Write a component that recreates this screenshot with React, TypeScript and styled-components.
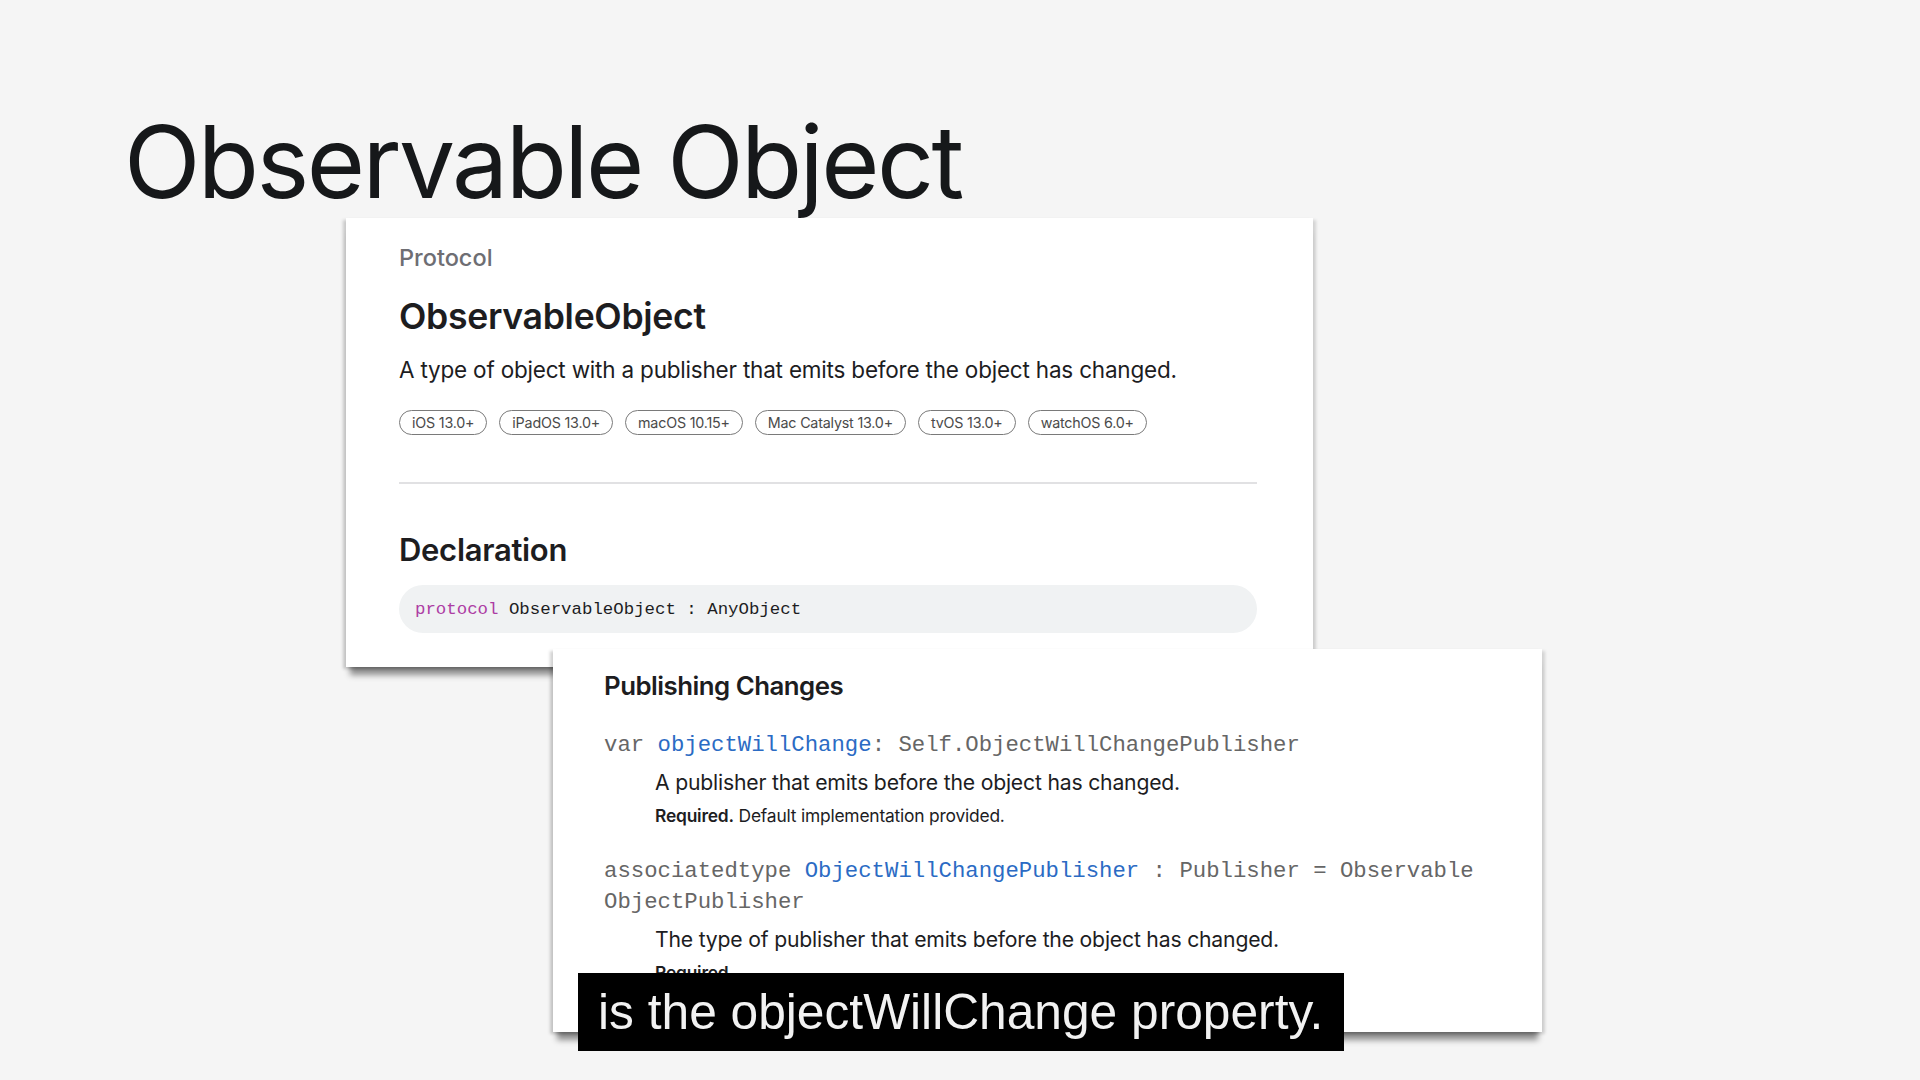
import React from 'react'
import styled, { createGlobalStyle } from 'styled-components'

const GlobalStyle = createGlobalStyle`
  html, body {
    margin: 0;
    padding: 0;
    background: #f5f5f5;
  }
  body {
    font-family: Inter, "Liberation Sans", sans-serif;
    color: #1d1d1f;
  }
`

const platforms = [
  'iOS 13.0+',
  'iPadOS 13.0+',
  'macOS 10.15+',
  'Mac Catalyst 13.0+',
  'tvOS 13.0+',
  'watchOS 6.0+',
]

export default function App(): JSX.Element {
  return (
    <Page>
      <GlobalStyle />
      <SlideTitle>Observable Object</SlideTitle>

      <ProtocolCard>
        <Eyebrow>Protocol</Eyebrow>
        <SymbolName>ObservableObject</SymbolName>
        <Abstract>
          A type of object with a publisher that emits before the object has
          changed.
        </Abstract>
        <BadgeRow>
          {platforms.map((p) => (
            <Badge key={p}>{p}</Badge>
          ))}
        </BadgeRow>
        <Divider />
        <SectionTitle>Declaration</SectionTitle>
        <CodeBlock>
          <Keyword>protocol</Keyword> ObservableObject : AnyObject
        </CodeBlock>
      </ProtocolCard>

      <TopicsCard>
        <TopicTitle>Publishing Changes</TopicTitle>

        <Signature>
          var <Link>objectWillChange</Link>: Self.ObjectWillChangePublisher
        </Signature>
        <TopicAbstract>A publisher that emits before the object has changed.</TopicAbstract>
        <Requirement>
          <strong>Required.</strong> Default implementation provided.
        </Requirement>

        <Signature $gap={29}>
          associatedtype <Link>ObjectWillChangePublisher</Link> : Publisher = Observable
          <br />
          ObjectPublisher
        </Signature>
        <TopicAbstract>
          The type of publisher that emits before the object has changed.
        </TopicAbstract>
        <Requirement>
          <strong>Required.</strong>
        </Requirement>
      </TopicsCard>

      <Subtitle>is the objectWillChange property.</Subtitle>
    </Page>
  )
}

const Page = styled.div`
  position: relative;
  width: 1920px;
  height: 1080px;
  overflow: hidden;
  background: #f5f5f5;
  display: flex;
  flex-direction: column;
  align-items: flex-start;
`

const SlideTitle = styled.h1`
  margin: 112px 0 0 124px;
  font-family: Inter, "Liberation Sans", sans-serif;
  font-weight: 400;
  font-size: 100px;
  line-height: 100px;
  letter-spacing: -2.6px;
  color: #16181a;
  white-space: nowrap;
`

const Card = styled.section`
  box-sizing: border-box;
  background: #ffffff;
  box-shadow:
    0 12px 6px -4px rgba(0, 0, 0, 0.42),
    -3px 2px 3px rgba(0, 0, 0, 0.18),
    3px 2px 3px rgba(0, 0, 0, 0.14);
`

const ProtocolCard = styled(Card)`
  margin: 6px 0 0 346px;
  width: 967px;
  padding: 25px 56px 34px 53px;
`

const Eyebrow = styled.div`
  font-size: 23.5px;
  line-height: 30px;
  font-weight: 500;
  color: #6e6e73;
`

const SymbolName = styled.h2`
  margin: 22px 0 0;
  font-size: 35.6px;
  line-height: 44px;
  font-weight: 600;
  letter-spacing: -0.3px;
`

const Abstract = styled.p`
  margin: 16px 0 0;
  font-size: 22.5px;
  line-height: 30px;
  font-weight: 400;
  letter-spacing: -0.2px;
`

const BadgeRow = styled.div`
  margin-top: 25px;
  display: flex;
  gap: 12px;
`

const Badge = styled.span`
  box-sizing: border-box;
  height: 25px;
  padding: 0 12px;
  border: 1px solid #7a7a7a;
  border-radius: 13px;
  display: inline-flex;
  align-items: center;
  font-size: 14.3px;
  color: #4a4a4a;
  letter-spacing: -0.2px;
`

const Divider = styled.hr`
  margin: 47px 0 0;
  height: 2px;
  border: 0;
  background: #e1e1e3;
`

const SectionTitle = styled.h3`
  margin: 48px 0 0;
  font-size: 31px;
  line-height: 36px;
  font-weight: 600;
  letter-spacing: -0.3px;
`

const CodeBlock = styled.div`
  margin-top: 17px;
  height: 48px;
  border-radius: 24px;
  background: #f0f2f3;
  padding: 0 16px;
  display: flex;
  align-items: center;
  font-family: "Liberation Mono", monospace;
  font-size: 17.4px;
  color: #1d1d1f;
  white-space: pre;
`

const Keyword = styled.span`
  color: #ad3da4;
`

const TopicsCard = styled(Card)`
  margin: -18px 0 0 553px;
  width: 989px;
  height: 383px;
  overflow: hidden;
  padding: 21px 40px 0 51px;
`

const TopicTitle = styled.h3`
  margin: 0;
  font-size: 25.8px;
  line-height: 32px;
  font-weight: 600;
  letter-spacing: -0.5px;
`

const Signature = styled.div<{ $gap?: number }>`
  margin-top: ${(p) => p.$gap ?? 28}px;
  font-family: "Liberation Mono", monospace;
  font-size: 22.3px;
  line-height: 31px;
  color: #666666;
  white-space: pre;
`

const Link = styled.span`
  color: #2b6bc4;
`

const TopicAbstract = styled.p`
  margin: 7px 0 0 51px;
  font-size: 21.2px;
  line-height: 28px;
  letter-spacing: -0.2px;
  color: #1d1d1f;
`

const Requirement = styled.p`
  margin: 9px 0 0 51px;
  font-size: 17.4px;
  line-height: 22px;
  letter-spacing: -0.2px;
  color: #1d1d1f;

  strong {
    font-weight: 600;
  }
`

const Subtitle = styled.div`
  position: absolute;
  left: 578px;
  top: 973px;
  height: 78px;
  padding: 0 21px 0 20px;
  background: #000000;
  color: #f2f2f2;
  font-family: "Liberation Sans", Arial, sans-serif;
  font-size: 49.7px;
  line-height: 78px;
  white-space: nowrap;
`
